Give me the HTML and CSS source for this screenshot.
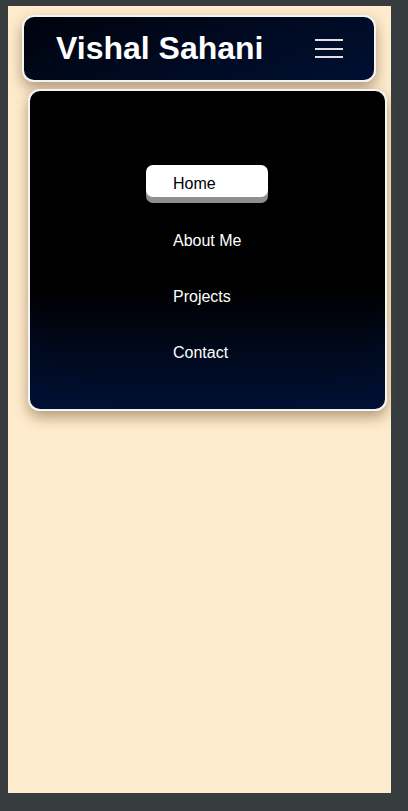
FILE: index.html
```html
<!DOCTYPE html>
<html>
<head>
<meta charset="utf-8">
<link rel="stylesheet" href="styles.css">
</head>
<body>
<div class="page">
  <header class="topbar">
    <h1 class="brand">Vishal Sahani</h1>
    <button class="burger" aria-label="menu">
      <span></span><span></span><span></span>
    </button>
  </header>
  <nav class="menu">
    <ul class="menu-list">
      <li><a class="menu-link active" href="#">Home</a></li>
      <li><a class="menu-link" href="#">About Me</a></li>
      <li><a class="menu-link" href="#">Projects</a></li>
      <li><a class="menu-link" href="#">Contact</a></li>
    </ul>
  </nav>
</div>
</body>
</html>
```
FILE: styles.css
```css
html {
  background: #373c3f;
  height: 100%;
}
body {
  margin: 6px 0 0 8px;
  font-family: "Liberation Sans", Arial, sans-serif;
}
.page {
  width: 383px;
  height: 787px;
  background: #ffebcd;
  padding: 9px 0 0 14px;
  box-sizing: border-box;
  display: flex;
  flex-direction: column;
  gap: 7px;
}
.topbar {
  width: 354px;
  height: 67px;
  flex: none;
  box-sizing: border-box;
  border: 2px solid #f4f4f4;
  border-radius: 12px;
  background: linear-gradient(160deg, #00030c 0%, #000a22 55%, #001032 100%);
  box-shadow: 0 6px 14px rgba(110, 85, 50, 0.55);
  display: flex;
  align-items: center;
  justify-content: space-between;
  padding: 0 31px 0 32px;
}
.brand {
  margin: 0;
  color: #fff;
  font-size: 32px;
  font-weight: bold;
  line-height: 1;
  padding-bottom: 2px;
}
.burger {
  background: none;
  border: 0;
  padding: 0;
  width: 28px;
  display: flex;
  flex-direction: column;
  gap: 6.5px;
}
.burger span {
  display: block;
  height: 2px;
  background: #e0e0e0;
}
.menu {
  margin-left: 6px;
  width: 359px;
  height: 322px;
  flex: none;
  box-sizing: border-box;
  border: 2px solid #f4f4f4;
  border-radius: 12px;
  background:
    linear-gradient(to bottom, rgba(0, 16, 52, 0) 62%, rgba(0, 16, 52, 1) 100%),
    radial-gradient(ellipse 72% 95% at 50% 35%, #000 75%, #000818 100%);
  box-shadow: 0 6px 14px rgba(110, 85, 50, 0.55);
  padding-top: 74px;
}
.menu-list {
  list-style: none;
  margin: 0;
  padding: 0 0 0 116px;
  display: flex;
  flex-direction: column;
  gap: 18px;
}
.menu-link {
  display: block;
  width: 122px;
  height: 38px;
  box-sizing: border-box;
  padding: 10px 0 0 27px;
  font-size: 16px;
  line-height: 18px;
  color: #fff;
  text-decoration: none;
}
.menu-link.active {
  height: 32px;
  margin-bottom: 7px;
  padding-top: 10px;
  background: #fff;
  color: #000;
  border-radius: 7px;
  box-shadow: 0 6px 0 #8f8f8f;
}
```
